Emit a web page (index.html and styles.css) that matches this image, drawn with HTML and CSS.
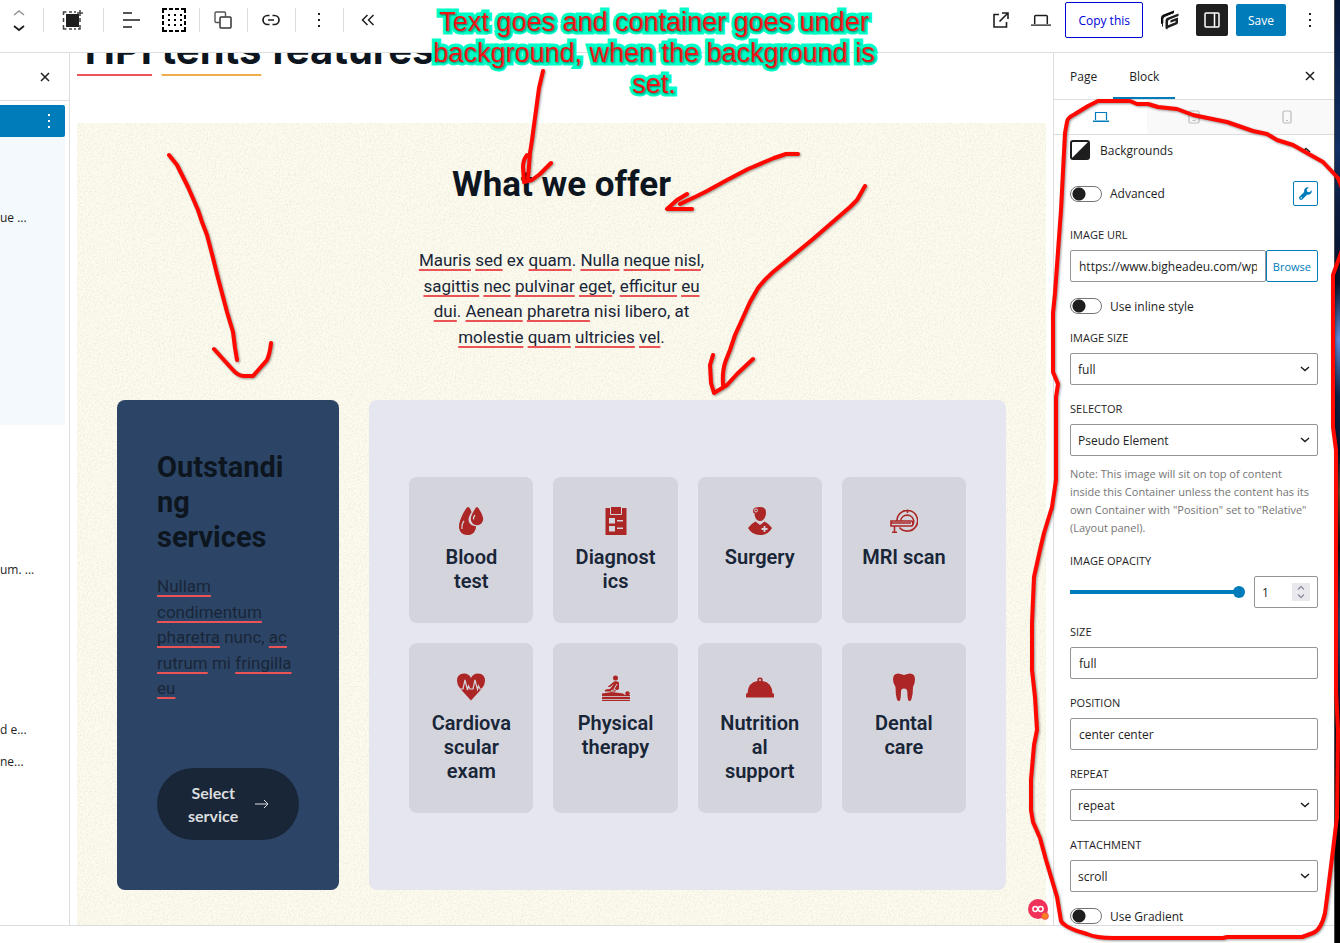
FILE: index.html
```
<!DOCTYPE html>
<html lang="en">
<head>
    <meta charset="UTF-8">
    <meta name="viewport" content="width=device-width, initial-scale=1.0">
    <title>Edit Page</title>
    <link rel="stylesheet" href="styles.css">
</head>
<body>
    <div class="editor">
        <!-- Top toolbar -->
        <header class="topbar">
            <div class="tool-group movers">
                <button class="tool" aria-label="Move up"><svg width="12" height="7" viewBox="0 0 12 7"><path d="M1 6l5-4 5 4" fill="none" stroke="#949494" stroke-width="1.5"/></svg></button>
                <button class="tool" aria-label="Move down"><svg width="12" height="7" viewBox="0 0 12 7"><path d="M1 1l5 4 5-4" fill="none" stroke="#1e1e1e" stroke-width="1.8"/></svg></button>
            </div>
            <div class="tool-group wide">
                <button class="tool" aria-label="Container"><svg width="22" height="22" viewBox="0 0 22 22"><rect x="4" y="5" width="13" height="13" fill="#1e1e1e"/><path d="M1.5 6V3h3M7 3h3M12 3h2M1.5 9v4M1.5 16v4h3M7 20h3M12 20h2M16 20h2v-4M18 9v4M18 1v6M15 4h6" fill="none" stroke="#444" stroke-width="1.5"/></svg></button>
            </div>
            <div class="tool-group pair">
                <button class="tool" aria-label="Align"><svg width="18" height="18" viewBox="0 0 18 18"><path d="M1 2h9M1 9h17M1 16h9" fill="none" stroke="#1e1e1e" stroke-width="1.6"/></svg></button>
                <button class="tool" aria-label="Grid"><svg width="24" height="24" viewBox="0 0 24 24"><path d="M1 5V1h4M7 1h4M13 1h4M19 1h4v4M23 7v4M23 13v4M23 19v4h-4M17 23h-4M11 23H7M5 23H1v-4M1 17v-4M1 11V7" fill="none" stroke="#000" stroke-width="2"/><path d="M6 7h14M6 12h14M6 17h14" stroke="#000" stroke-width="2" stroke-dasharray="2 4"/></svg></button>
            </div>
            <div class="tool-group">
                <button class="tool" aria-label="Duplicate"><svg width="18" height="18" viewBox="0 0 18 18"><path d="M5.500 11.500H2.200a1.200 1.200 0 0 1-1.200-1.200V2.200A1.200 1.200 0 0 1 2.200 1h8.100a1.200 1.200 0 0 1 1.200 1.200v3.300" fill="none" stroke="#555" stroke-width="1.4"/><rect x="6" y="6" width="11" height="11" rx="1" fill="none" stroke="#333" stroke-width="1.5"/></svg></button>
            </div>
            <div class="tool-group">
                <button class="tool" aria-label="Link"><svg width="18" height="12" viewBox="0 0 18 12"><path d="M7.500 1.500H5.500a4.500 4.500 0 0 0 0 9h2M10.500 1.500h2a4.500 4.500 0 0 1 0 9h-2M6 6h6" fill="none" stroke="#1e1e1e" stroke-width="1.7"/></svg></button>
            </div>
            <div class="tool-group">
                <button class="tool" aria-label="Options"><svg width="4" height="16" viewBox="0 0 4 16"><path d="M1 1h2v2H1zM1 7h2v2H1zM1 13h2v2H1z" fill="#1e1e1e"/></svg></button>
            </div>
            <div class="tool-group last">
                <button class="tool" aria-label="Hide block tools"><svg width="14" height="12" viewBox="0 0 14 12"><path d="M6.500 1l-5 5 5 5M12.500 1l-5 5 5 5" fill="none" stroke="#1e1e1e" stroke-width="1.5"/></svg></button>
            </div>

            <div class="actions">
                <a class="tool icon-link" href="#" aria-label="View page"><svg width="16" height="16" viewBox="0 0 16 16"><path d="M6 2.500H1V15h12.500v-5M9 1h6v6M15 1L6.500 9.500" fill="none" stroke="#1e1e1e" stroke-width="1.6"/></svg></a>
                <button class="tool" aria-label="Preview"><svg width="20" height="13" viewBox="0 0 20 13"><path d="M3.700 10V2.500c0-.6.400-1 1-1h10.600c.6 0 1 .4 1 1V10" fill="none" stroke="#1e1e1e" stroke-width="1.5"/><path d="M0 10.300h20v1.700H0z" fill="#555"/></svg></button>
                <button class="copy-btn">Copy this</button>
                <button class="tool" aria-label="Blocks settings"><svg width="18" height="20" viewBox="0 0 18 20"><path d="M0 14V8Q0 5.500 2 4.700L13 .5v2.600L4 6.700Q2.300 7.500 2.300 9v4z"/><path d="M4.500 18.500V10.500Q4.500 8.500 6.500 7.700L17.500 3.500v2.600L8.500 9.600Q7 10.200 7 11.800v3.400l7.500-2.900V10.800l-5 1.900v-2.400l7.500-2.900V12.500Q17 14 15.500 14.600L6.500 18.200v1.300z" fill="#1e1e1e"/><path d="M1.500 16.500V6.800L12.800 2.500" fill="none" stroke="#1e1e1e"/></svg></button>
                <button class="sidebar-btn" aria-label="Settings"><svg width="16" height="16" viewBox="0 0 16 16"><rect x="1" y="1" width="14" height="14" rx="1" fill="none" stroke="#fff" stroke-width="1.500"/><path d="M10.500 1v14" stroke="#fff" stroke-width="1.500"/></svg></button>
                <button class="save-btn">Save</button>
                <button class="tool" aria-label="More"><svg width="4" height="16" viewBox="0 0 4 16"><path d="M1 1h2v2H1zM1 7h2v2H1zM1 13h2v2H1z" fill="#1e1e1e"/></svg></button>
            </div>
        </header>

        <div class="workspace">
            <!-- List view -->
            <aside class="list-view">
                <div class="list-head">
                    <button class="tool" aria-label="Close list"><svg width="10" height="10" viewBox="0 0 10 10"><path d="M1 1l8 8M9 1L1 9" stroke="#1e1e1e" stroke-width="1.500"/></svg></button>
                </div>
                <ul class="rows">
                    <li class="selected"><button class="tool" aria-label="Row options"><svg width="4" height="16" viewBox="0 0 4 16"><path d="M1 1h2v2H1zM1 7h2v2H1zM1 13h2v2H1z" fill="#fff"/></svg></button></li>
                    <li class="child"></li>
                    <li class="child"></li>
                    <li class="child">ue ...</li>
                    <li class="child"></li>
                    <li class="child"></li>
                    <li class="child"></li>
                    <li class="child"></li>
                    <li class="child"></li>
                    <li class="child"></li>
                    <li></li>
                    <li></li>
                    <li></li>
                    <li></li>
                    <li>um. ...</li>
                    <li></li>
                    <li></li>
                    <li></li>
                    <li></li>
                    <li>d e...</li>
                    <li>ne...</li>
                </ul>
            </aside>

            <!-- Page canvas -->
            <main class="canvas">
                <div class="features">
                    <h2><span class="typo">TIPI</span> <span class="typo grammar">tents</span> features</h2>
                </div>
                <section class="offer">
                    <h2>What we offer</h2>
                    <p class="intro"><span class="typo">Mauris</span> <span class="typo">sed</span> ex <span class="typo">quam</span>. <span class="typo">Nulla</span> <span class="typo">neque</span> <span class="typo">nisl</span>, <span class="typo">sagittis</span> <span class="typo">nec</span> <span class="typo">pulvinar</span> <span class="typo">eget</span>, <span class="typo">efficitur</span> <span class="typo">eu</span> <span class="typo">dui</span>. <span class="typo">Aenean</span> <span class="typo">pharetra</span> nisi libero, at <span class="typo">molestie</span> <span class="typo">quam</span> <span class="typo">ultricies</span> <span class="typo">vel</span>.</p>
                    <div class="panels">
                        <div class="outstanding">
                            <h3>Outstanding services</h3>
                            <p><span class="typo">Nullam</span> <span class="typo">condimentum</span> <span class="typo">pharetra</span> nunc, <span class="typo">ac</span> <span class="typo">rutrum</span> mi <span class="typo">fringilla</span> <span class="typo">eu</span></p>
                            <button class="select-btn">
                                <span>Select service</span>
                                <svg width="14" height="10" viewBox="0 0 14 10"><path d="M0 5h13M9 1l4 4-4 4" fill="none" stroke="#dcdddf" stroke-width="1"/></svg>
                            </button>
                        </div>
                        <div class="services">
                            <article class="card">
                                <svg width="28" height="28" viewBox="0 0 28 28"><path d="M11 0C12.500 0 14 3 14.500 5.200 12 9 10.800 12 12 15q1.500 4 7 4.200C19 24.500 15.500 28 10.500 28 5.500 28 2 24.500 2 19.500 2 13 9 0 11 0z"/><path d="M20 0c1.200 0 6.200 8 6.200 12a6 6 0 0 1-12.400 0C13.800 8 18.800 0 20 0z"/><path d="M7 14q-2.500 3-2 8M18 8q-1.800 2-1.500 4.500" fill="none" stroke="#d4d4dd" stroke-width="1.200"/></svg>
                                <h4>Blood test</h4>
                            </article>
                            <article class="card">
                                <svg width="28" height="28" viewBox="0 0 28 28"><path d="M3.500 1H8v6q0 1 1 1h10q1 0 1-1V1h4.500v27h-21z"/><path d="M9 0h10v7H9z"/><path d="M7 11h6v5.500H7zM7 19h6v5.500H7zM15 13h6v1.500h-6zM15 20.500h6V22h-6z" fill="#d4d4dd"/></svg>
                                <h4>Diagnostics</h4>
                            </article>
                            <article class="card">
                                <svg width="28" height="28" viewBox="0 0 28 28"><path d="M14 0c4 0 6 1.500 6 5.500C20 11 17 14 14 14S8.500 11 8.500 6H7.500Q6.500 4 7.500 2T14 0z"/><path d="M9.500 14.500L14 18l4.500-3.500q5 2.500 7.500 6.500Q22 28 14 28T2 21q2.500-4 7.500-6.500z"/><circle cx="10" cy="3.500" r="1.500" fill="none" stroke="#d4d4dd"/><path d="M18.500 19v6M15.500 22h6" stroke="#d4d4dd" stroke-width="1.800"/></svg>
                                <h4>Surgery</h4>
                            </article>
                            <article class="card">
                                <svg width="28" height="28" viewBox="0 0 28 28" class="outline"><path d="M7 14A10.300 10.300 0 1 1 9.500 20.500M10.500 14a6.700 6.700 0 0 1 13.300 0 6.700 6.700 0 0 1-2 5H1v-5h20q2 0 2 2.500T21 19M1 16h20M4.500 19v6M2 25.200h5M17.500 2.500v3.500"/></svg>
                                <h4>MRI scan</h4>
                            </article>
                            <article class="card">
                                <svg width="28" height="28" viewBox="0 0 28 28"><path d="M14 27.500L3.500 16Q0 12 0 8 0 .5 7 .5q5 0 7 4.500Q16 .5 21 .5q7 0 7 7.500 0 4-3.500 8z"/><path d="M2 16h4l2-9 2.500 10 1-4 1.500 3h3l2-9 2.500 9.500 1-3.500 1.500 3h3" fill="none" stroke="#d4d4dd" stroke-width="1.200"/></svg>
                                <h4>Cardiovascular exam</h4>
                            </article>
                            <article class="card">
                                <svg width="28" height="28" viewBox="0 0 28 28"><circle cx="13.500" cy="5" r="2.500"/><path d="M12 8.500q3-.8 5 1V16l-4 2.500H3Q2 17 4.500 16.300L8 16 12 11l-4 3H5.500z"/><path d="M0 20.500l10-1.500 11 1.500L23 22H0zM0 24h28v4H0z"/><circle cx="25.500" cy="20.500" r="2.200"/><path d="M22 22h6v1.200H0V22z"/><path d="M15 11l-3 5M9 18l4-1.500 2 1.500" fill="none" stroke="#d4d4dd"/><path d="M0 26.500h28" stroke="#d4d4dd" stroke-width=".8"/></svg>
                                <h4>Physical therapy</h4>
                            </article>
                            <article class="card">
                                <svg width="28" height="28" viewBox="0 0 28 28"><path d="M1.500 20Q2 9.500 11.500 8q-.8-3.500 2.500-3.500T16.500 8Q26 9.500 26.500 20.500H28v4H0v-4h1.500z"/><circle cx="14" cy="7" r="1" fill="#d4d4dd"/></svg>
                                <h4>Nutritional support</h4>
                            </article>
                            <article class="card">
                                <svg width="28" height="28" viewBox="0 0 28 28"><path d="M14 2q4-1.500 6-1.500 5 0 5 6 0 4-2 7.500 0 7-1.500 12-1 3-3 1.500-1-1-1.200-9Q17 15.500 14 15.500t-3 3q-.2 8-1.200 9.300-2 1-3-1.800Q5.500 21 5.500 14 3 10.500 3 6.500q0-6 5-6 2 0 6 1.500z"/></svg>
                                <h4>Dental care</h4>
                            </article>
                        </div>
                    </div>
                </section>
                <div class="badge">
                    <svg width="22" height="22" viewBox="0 0 22 22"><circle cx="10" cy="10" r="10" fill="#f0325a"/><circle cx="7.300" cy="10" r="2.400" fill="none" stroke="#fff" stroke-width="1.500"/><circle cx="12.700" cy="10" r="2.400" fill="none" stroke="#fff" stroke-width="1.500"/><circle cx="17" cy="17" r="3.500" fill="#f5821f" stroke="#f0325a" stroke-width=".6"/></svg>
                </div>
            </main>

            <!-- Block settings -->
            <aside class="settings">
                <div class="tabs">
                    <button class="tab">Page</button>
                    <button class="tab active">Block</button>
                    <button class="tool close" aria-label="Close settings"><svg width="10" height="10" viewBox="0 0 10 10"><path d="M1 1l8 8M9 1L1 9" stroke="#1e1e1e" stroke-width="1.500"/></svg></button>
                </div>
                <div class="devices">
                    <button class="device active" aria-label="Desktop"><svg width="16" height="12" viewBox="0 0 16 12"><path d="M2.500 9V1.500h11V9" fill="none" stroke="#007cba" stroke-width="1.200"/><path d="M0 9.500h16V11H0z" fill="#007cba"/></svg></button>
                    <button class="device" aria-label="Tablet"><svg width="12" height="14" viewBox="0 0 12 14"><rect x="1" y="1" width="10" height="12" rx="1.500" fill="none" stroke="#bbb" stroke-width="1.200"/><path d="M4.500 10.500h3" stroke="#bbb"/></svg></button>
                    <button class="device" aria-label="Mobile"><svg width="10" height="14" viewBox="0 0 10 14"><rect x="1" y="1" width="8" height="12" rx="1.500" fill="none" stroke="#bbb" stroke-width="1.200"/><path d="M4 10.500h2" stroke="#bbb"/></svg></button>
                </div>
                <div class="panel">
                    <button class="panel-title">
                        <svg width="20" height="20" viewBox="0 0 20 20"><rect x="1" y="1" width="18" height="18" rx="2" fill="#fff" stroke="#1e1e1e" stroke-width="2"/><path d="M19 1v18H1z" fill="#1e1e1e"/></svg>
                        <span>Backgrounds</span>
                        <svg width="10" height="6" viewBox="0 0 10 6"><path d="M1 5l4-3.500L9 5" fill="none" stroke="#1e1e1e" stroke-width="1.500"/></svg>
                    </button>
                    <div class="switch-row advanced">
                        <input class="switch" type="checkbox" id="advanced">
                        <label for="advanced">Advanced</label>
                        <button class="wrench" aria-label="Tools"><svg width="13" height="13" viewBox="0 0 13 13"><path d="M12.600 3.200L10.500 5.300 8.300 4.700 7.700 2.500 9.800.4A3.700 3.700 0 0 0 5.200 4.900L.7 9.400a1.900 1.900 0 0 0 2.800 2.800L8 7.700A3.700 3.700 0 0 0 12.600 3.200zM2.200 11.500a.7.700 0 1 1 .1 0z" fill="#007cba"/></svg></button>
                    </div>
                    <div class="field">
                        <label for="image-url">Image URL</label>
                        <div class="url-row">
                            <input type="text" id="image-url" value="https://www.bigheadeu.com/wp-content/uploads">
                            <button class="browse">Browse</button>
                        </div>
                    </div>
                    <div class="switch-row">
                        <input class="switch" type="checkbox" id="inline-style">
                        <label for="inline-style">Use inline style</label>
                    </div>
                    <div class="field">
                        <label for="image-size">Image size</label>
                        <select id="image-size"><option>full</option></select>
                    </div>
                    <div class="field">
                        <label for="selector">Selector</label>
                        <select id="selector"><option>Pseudo Element</option></select>
                        <p class="note">Note: This image will sit on top of content inside this Container unless the content has its own Container with "Position" set to "Relative" (Layout panel).</p>
                    </div>
                    <div class="field">
                        <label for="opacity">Image opacity</label>
                        <div class="range-row">
                            <input type="range" id="opacity" min="0" max="1" step="0.1" value="1">
                            <div class="number">
                                <input type="text" inputmode="decimal" value="1" aria-label="Opacity value">
                                <span class="stepper"><svg width="8" height="14" viewBox="0 0 8 14"><path d="M1 4.500l3-3 3 3M1 9.500l3 3 3-3" fill="none" stroke="#8f8f9d" stroke-width="1.400"/></svg></span>
                            </div>
                        </div>
                    </div>
                    <div class="field">
                        <label for="size">Size</label>
                        <input type="text" id="size" value="full">
                    </div>
                    <div class="field">
                        <label for="position">Position</label>
                        <input type="text" id="position" value="center center">
                    </div>
                    <div class="field">
                        <label for="repeat">Repeat</label>
                        <select id="repeat"><option>repeat</option></select>
                    </div>
                    <div class="field">
                        <label for="attachment">Attachment</label>
                        <select id="attachment"><option>scroll</option></select>
                    </div>
                    <div class="switch-row">
                        <input class="switch" type="checkbox" id="gradient">
                        <label for="gradient">Use Gradient</label>
                    </div>
                </div>
            </aside>
        </div>
        <footer class="footer"></footer>
    </div>
    <div class="desktop"></div>

    <!-- Hand-drawn notes over the editor -->
    <svg class="markup" width="1340" height="943" viewBox="0 0 1340 943">
        <path d="M543 71L539 88 532 140 530 153 528 178M527 155Q523 160 523 167L524 182 532 180 540 174 551 163"/>
        <path d="M798 154H786L774 158 748 169 727 180 707 191 697 196 680 204M687 194L677 200 667 209 692 209"/>
        <path d="M169 155L177 165 188 187 198 210 202 222 207 235 213 258 218 278 227 312 233 332 235 348 237 360M214 349L232 369Q238 376 244 376H253L267 360Q270 353 271 343"/>
        <path d="M865 186L857 200 850 207 813 239 773 272Q765 279 758 288L750 302 735 335 730 350 726 360Q722 370 723 385M713 355L710 365 711 383 714 393 727 385 737 374 753 359"/>
        <path d="M1342 188L1338 178 1323 162 1307 153 1293 145 1277 140 1267 134 1253 131 1227 122 1193 115 1177 109 1158 107 1148 104H1137L1130 101H1098L1088 106 1075 114Q1067 118 1067 122L1065 133 1061 210 1055 293 1053 313V372L1058 384 1056 397V480L1052 507 1044 533 1040 550 1034 577 1032 623V670L1035 697 1037 730 1034 745 1031 780V810L1033 822 1040 838 1046 860 1057 897 1061 921Q1065 928 1087 934 1096 938 1113 938H1223L1227 937H1302L1313 933Q1321 930 1325 913L1328 890 1333 850 1337 817 1338 730 1336 690V567L1336 450 1333 427V275L1342 250"/>
    </svg>
    <p class="remark">Text goes and container goes under background, when the background is set.</p>
</body>
</html>
```
FILE: styles.css
```
* {
    box-sizing: border-box;
}

body {
    margin: 0;
    height: 100vh;
    display: flex;
    position: relative;
    overflow: hidden;
    background: #fff;
    color: #1e1e1e;
    font-family: "Open Sans", "Noto Sans", sans-serif;
    font-size: 12px;
}

h2, h3, h4, p, ul {
    margin: 0;
}

button, input, select {
    font: inherit;
    color: inherit;
}

button {
    padding: 0;
    border: none;
    background: none;
    cursor: pointer;
}

svg {
    display: block;
    flex: none;
}

.editor {
    flex: 1;
    min-width: 0;
    display: flex;
    flex-direction: column;
}

.desktop {
    width: 6px;
    border-left: 1px solid #4a4a4a;
    background: linear-gradient(#06183a 0, #123064 16%, #0a1c40 22%, #04122c 30%, #5f8bdc 36%, #0a2148 42%, #04122c 48%, #6a5238 52%, #101010 58%, #3a4a80 66%, #06142e 76%, #000 84%);
}

/* Toolbar */
.topbar {
    display: flex;
    align-items: center;
    height: 53px;
    padding-bottom: 12px;
    border-bottom: 1px solid #ddd;
}

.tool {
    display: flex;
    align-items: center;
    justify-content: center;
}

.tool-group {
    width: 48px;
    height: 24px;
    display: flex;
    align-items: center;
    justify-content: center;
    padding-right: 1px;
    border-right: 1px solid #ddd;
}

.tool-group.movers {
    width: 44px;
    padding-right: 6px;
    flex-direction: column;
    gap: 9px;
}

.tool-group.wide {
    width: 60px;
}

.tool-group.pair {
    width: 96px;
    gap: 22px;
    padding-left: 6px;
}

.tool-group.last {
    border-right: none;
}

.actions {
    margin-left: auto;
    display: flex;
    align-items: center;
    gap: 8px;
    padding-right: 8px;
}

.actions .tool {
    width: 32px;
    height: 32px;
}

.copy-btn {
    height: 36px;
    padding: 0 12px;
    border: 1px solid #0000d8;
    border-radius: 2px;
    color: #0000d8;
}

.actions .copy-btn + .tool {
    width: 37px;
}

.sidebar-btn {
    width: 32px;
    height: 32px;
    display: flex;
    align-items: center;
    justify-content: center;
    border-radius: 2px;
    background: #1e1e1e;
}

.save-btn {
    height: 32px;
    padding: 0 12px;
    border-radius: 2px;
    background: #007cba;
    color: #fff;
}

.workspace {
    flex: 1;
    min-height: 0;
    display: flex;
    overflow: hidden;
}

.footer {
    height: 18px;
    border-top: 1px solid #ddd;
}

/* List view */
.list-view {
    width: 70px;
    border-right: 1px solid #ddd;
}

.list-head {
    display: flex;
    align-items: center;
    justify-content: flex-end;
    height: 48px;
    padding-right: 19px;
    border-bottom: 1px solid #ddd;
}

.rows {
    padding: 4px 4px 0 0;
    list-style: none;
}

.rows li {
    height: 32px;
    line-height: 34px;
}

.rows .child {
    background: #f4f9fd;
}

.rows .selected {
    display: flex;
    align-items: center;
    justify-content: flex-end;
    padding-right: 14px;
    border-radius: 0 2px 2px 0;
    background: #007cba;
}

/* Canvas */
.canvas {
    flex: 1;
    min-width: 0;
    position: relative;
    display: flex;
    flex-direction: column;
    padding: 0 7px;
    font-family: Roboto, sans-serif;
}

.typo {
    text-decoration: underline 2px #ea5456;
    text-decoration-skip-ink: none;
    text-underline-offset: 3px;
}

/* scrolled partly under the toolbar */
.features {
    flex: none;
    display: flex;
    align-items: flex-end;
    height: 70px;
    padding-bottom: 51px;
    overflow: hidden;
}

.features h2 {
    color: #0d151f;
    font: bold 40px/44px Inter, sans-serif;
}

.features .typo {
    text-underline-offset: 10px;
}

.features .grammar {
    text-decoration-color: #f0ad4e;
}

.offer {
    flex: 1;
    padding: 40px 40px 36px;
    background: #fdfbee url("data:image/svg+xml,%3Csvg xmlns='http://www.w3.org/2000/svg' width='300' height='300'%3E%3Cfilter id='n' x='0' y='0' width='100%25' height='100%25'%3E%3CfeTurbulence type='fractalNoise' baseFrequency='0.6' numOctaves='3' stitchTiles='stitch'/%3E%3CfeColorMatrix values='0 0 0 0 0.62 0 0 0 0 0.58 0 0 0 0 0.5 0 0 0 0.7 -0.29'/%3E%3C/filter%3E%3Crect width='300' height='300' filter='url(%23n)'/%3E%3C/svg%3E");
}

.offer h2 {
    color: #0d151f;
    font-size: 35px;
    line-height: 44px;
    text-align: center;
}

.intro {
    max-width: 296px;
    margin: 41px auto 50px;
    color: #192638;
    font-size: 17px;
    line-height: 1.5;
    text-align: center;
}

.panels {
    display: flex;
    gap: 30px;
}

.outstanding {
    flex: none;
    width: 25%;
    display: flex;
    flex-direction: column;
    padding: 50px 40px;
    border-radius: 8px;
    background: #2c4566;
    color: #192638;
}

.outstanding h3 {
    margin-bottom: 20px;
    color: #0d151f;
    font-size: 29px;
    line-height: 1.2;
    overflow-wrap: anywhere;
}

.outstanding p {
    margin-bottom: 66px;
    font-size: 17px;
    line-height: 1.5;
}

.select-btn {
    display: flex;
    align-items: center;
    justify-content: center;
    gap: 14px;
    margin-top: auto;
    padding: 13px 30px 13px 28px;
    border-radius: 36px;
    background: #192638;
    color: #dcdddf;
    font: bold 16px/23px Lato, sans-serif;
}

.services {
    flex: 1;
    min-width: 0;
    display: grid;
    grid-template-columns: repeat(4, minmax(0, 1fr));
    align-content: center;
    gap: 20px;
    padding: 40px;
    border-radius: 8px;
    background: #e5e6ef;
}

.card {
    display: flex;
    flex-direction: column;
    align-items: center;
    gap: 10px;
    padding: 30px 20px;
    border-radius: 8px;
    background: #d4d4dd;
}

.card svg {
    fill: #ab2624;
}

.card svg.outline {
    fill: none;
    stroke: #ab2624;
    stroke-width: 1.6px;
}

.card h4 {
    max-width: 100%;
    color: #192638;
    font-size: 20px;
    font-weight: 600;
    line-height: 24px;
    text-align: center;
    overflow-wrap: anywhere;
}

.badge {
    position: absolute;
    right: 3px;
    bottom: 4px;
}

/* Settings sidebar */
.settings {
    flex: none;
    width: 281px;
    border-left: 1px solid #ddd;
}

.tabs {
    display: flex;
    height: 47px;
    border-bottom: 1px solid #ddd;
}

.tab {
    padding: 0 16px;
}

.tab.active {
    box-shadow: inset 0 -2px #007cba;
}

.tabs .close {
    margin-left: auto;
    padding-right: 19px;
}

.devices {
    display: flex;
    height: 35px;
    border-bottom: 1px solid #ddd;
}

.device {
    flex: 1;
    display: flex;
    align-items: center;
    justify-content: center;
    background: #f9f9f9;
}

.device.active {
    background: #fff;
}

.panel {
    display: flex;
    flex-direction: column;
    gap: 16px;
    padding: 0 16px;
}

.panel-title {
    display: flex;
    align-items: center;
    gap: 10px;
    height: 30px;
    padding-right: 7px;
}

.panel-title span {
    flex: 1;
    text-align: left;
}

.switch-row {
    display: flex;
    align-items: center;
    gap: 8px;
    height: 16px;
}

.switch-row.advanced {
    height: 25px;
    margin-bottom: 5px;
}

.switch {
    appearance: none;
    width: 32px;
    height: 16px;
    margin: 0;
    border: 1px solid #757575;
    border-radius: 8px;
    background: radial-gradient(circle at 8px 7px, #1e1e1e 6px, #fff 7px);
}

.wrench {
    width: 25px;
    height: 25px;
    display: flex;
    align-items: center;
    justify-content: center;
    margin-left: auto;
    border: 1px solid #007cba;
    border-radius: 2px;
}

.field {
    display: flex;
    flex-direction: column;
    gap: 8px;
}

.field > label {
    font-size: 11px;
    line-height: 15px;
    text-transform: uppercase;
}

.field input[type="text"],
.field select {
    width: 100%;
    min-width: 0;
    height: 32px;
    padding: 0 8px;
    border: 1px solid #949494;
    border-radius: 2px;
    background: #fff;
}

.field select {
    appearance: none;
    padding-left: 7px;
    background: #fff url("data:image/svg+xml,%3Csvg xmlns='http://www.w3.org/2000/svg' width='10' height='6'%3E%3Cpath d='M1 1l4 3.500L9 1' fill='none' stroke='%231e1e1e' stroke-width='1.500'/%3E%3C/svg%3E") no-repeat right 7px center;
}

.url-row {
    display: flex;
}

.browse {
    flex: none;
    padding: 0 6px;
    border: 1px solid #007cba;
    border-radius: 2px;
    color: #007cba;
    font-size: 11px;
}

.note {
    padding: 1px 6px 0 0;
    color: #757575;
    font-size: 11px;
    line-height: 18px;
}

.range-row {
    display: flex;
    align-items: center;
    gap: 9px;
}

.range-row input[type="range"] {
    appearance: none;
    flex: 1;
    min-width: 0;
    height: 12px;
    margin: 0;
    background: linear-gradient(#007cba, #007cba) no-repeat left center / calc(100% - 6px) 4px;
}

.range-row input[type="range"]::-webkit-slider-thumb {
    appearance: none;
    width: 12px;
    height: 12px;
    border-radius: 50%;
    background: #007cba;
}

.number {
    display: flex;
    align-items: center;
    width: 64px;
    height: 32px;
    padding-right: 7px;
    border: 1px solid #949494;
    border-radius: 2px;
}

.field .number input {
    flex: 1;
    height: 30px;
    padding-left: 7px;
    border: none;
}

.stepper {
    display: flex;
    align-items: center;
    justify-content: center;
    flex: none;
    width: 18px;
    height: 18px;
    background: #e9e9ed;
}

/* Notes drawn over the editor */
.markup {
    position: absolute;
    top: 0;
    left: 0;
    fill: none;
    stroke: #ff0800;
    stroke-width: 4px;
    stroke-linecap: round;
    stroke-linejoin: round;
    filter: drop-shadow(1px 1px 1px #0006);
    pointer-events: none;
}

.remark {
    position: absolute;
    top: 7px;
    left: 420px;
    width: 468px;
    color: #f01414;
    font: 27px/31px "Liberation Sans", Arial, sans-serif;
    text-align: center;
    -webkit-text-stroke: 7px #00ffc8;
    paint-order: stroke fill;
    text-shadow: 1px 1px 2px #0008;
    pointer-events: none;
}
```
